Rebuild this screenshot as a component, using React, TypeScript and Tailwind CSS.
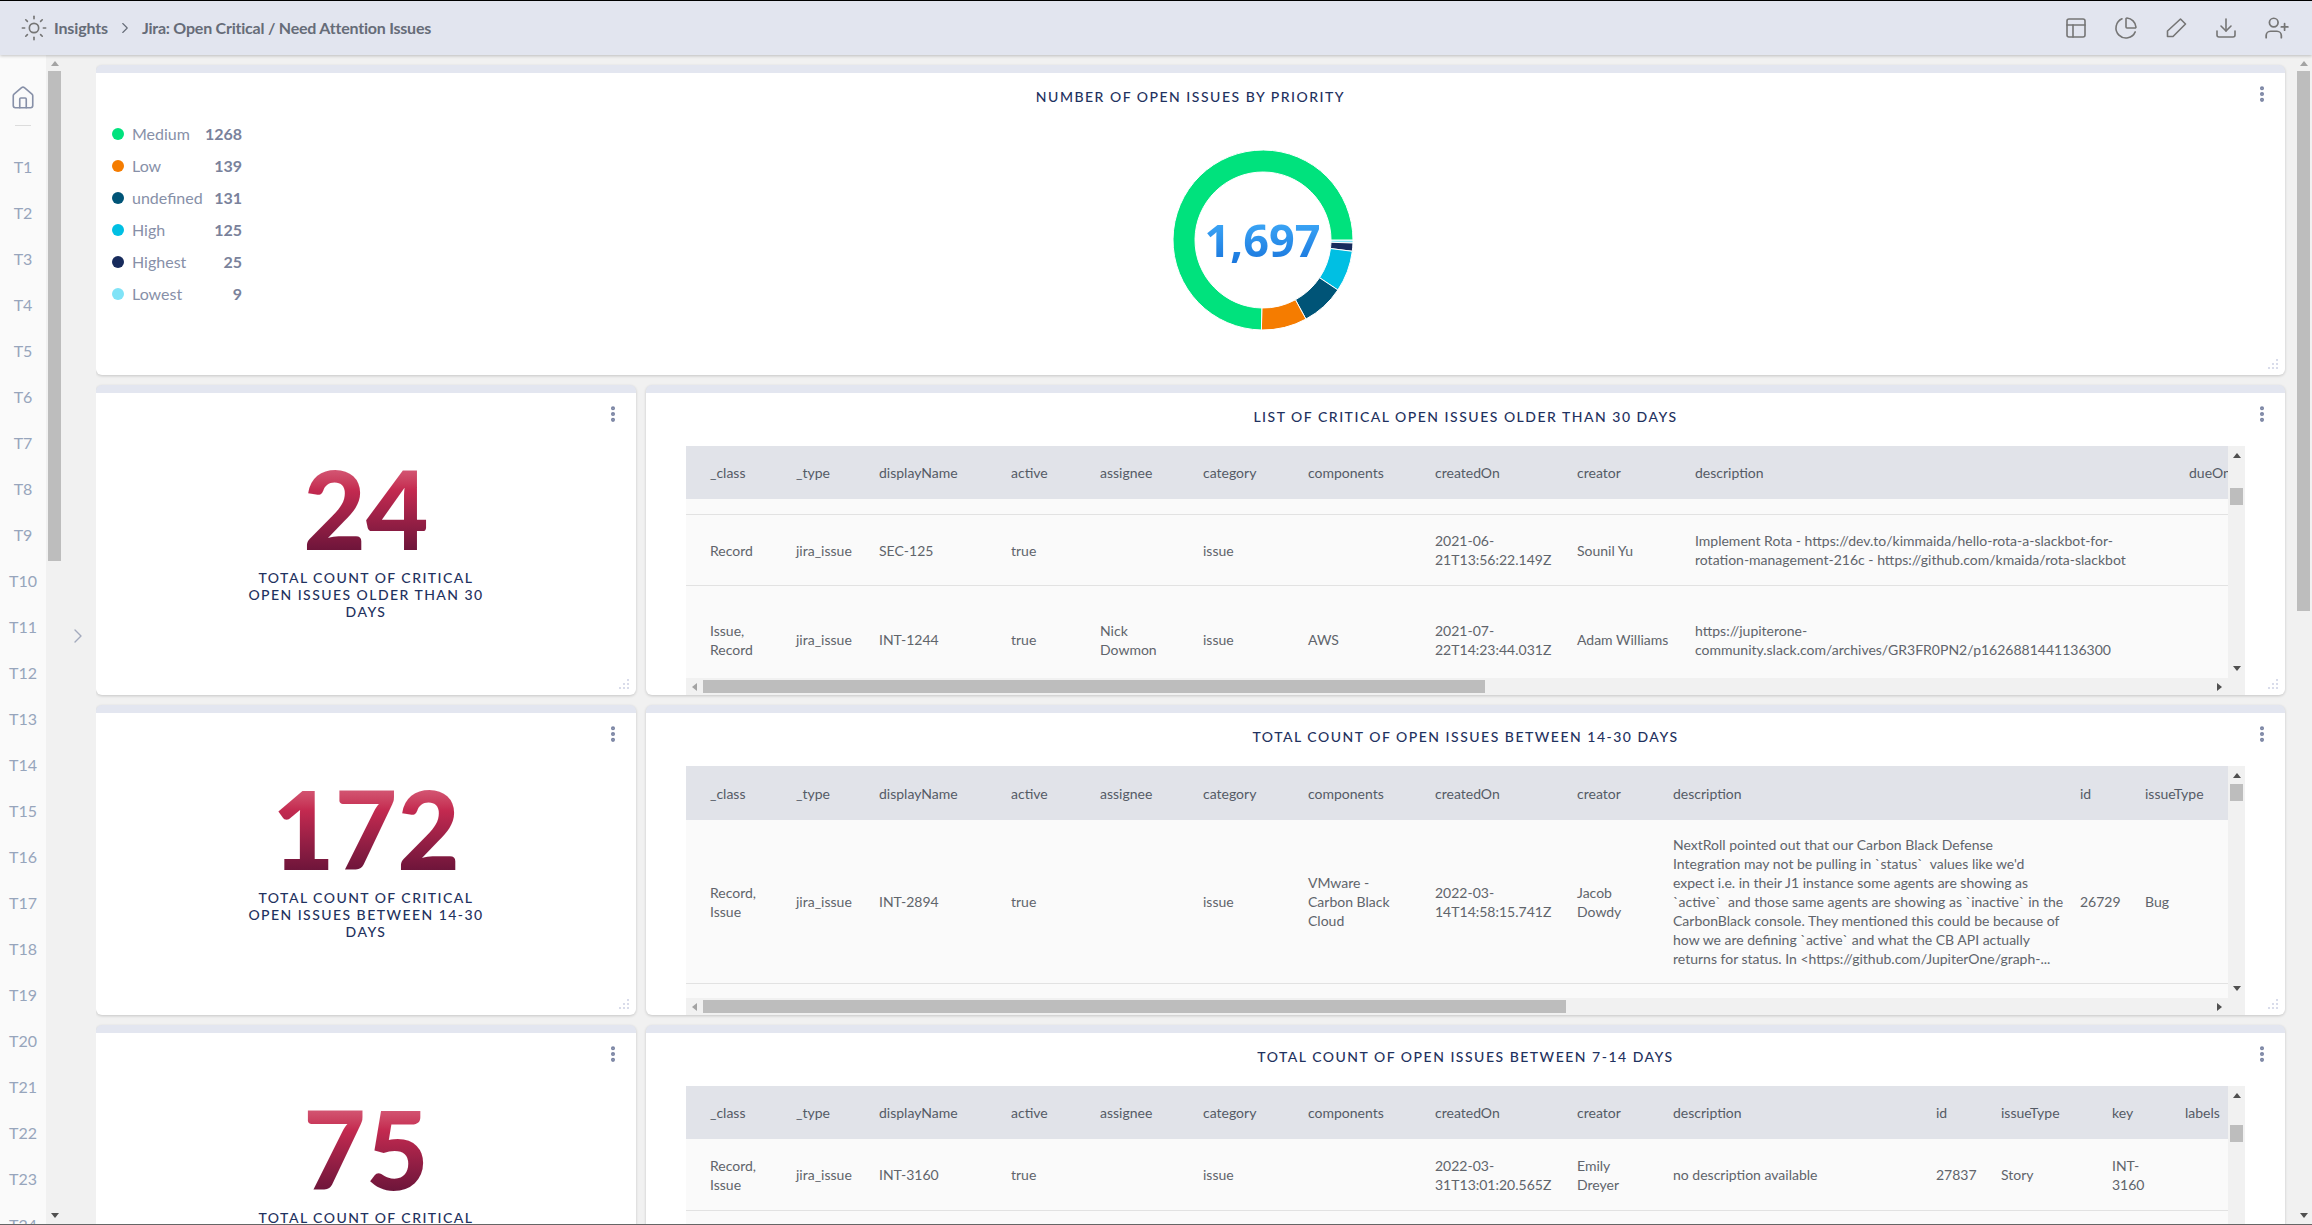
import React from "react";
import { ChartPie, ChevronRight, Download, EllipsisVertical, House, PanelsTopLeft, Sun, UserPlus } from "lucide-react";

const legend = [
  { label: "Medium", value: 1268, color: "#00e27d" },
  { label: "Low", value: 139, color: "#f57c00" },
  { label: "undefined", value: 131, color: "#005477" },
  { label: "High", value: 125, color: "#00bfe3" },
  { label: "Highest", value: 25, color: "#172b5c" },
  { label: "Lowest", value: 9, color: "#80e3f7" },
];

function Donut() {
  const total = 1697;
  const cx = 91, cy = 91, R = 90, r = 68;
  let a = 0;
  const order = [...legend].reverse();
  const pt = (rad: number, deg: number) => {
    const t = (deg * Math.PI) / 180;
    return `${(cx + rad * Math.cos(t)).toFixed(3)} ${(cy + rad * Math.sin(t)).toFixed(3)}`;
  };
  return (
    <svg width="182" height="182" viewBox="0 0 182 182">
      {order.map((s) => {
        const start = a;
        const end = a + (s.value / total) * 360;
        a = end;
        const large = end - start > 180 ? 1 : 0;
        return (
          <path
            key={s.label}
            d={`M ${pt(R, start)} A ${R} ${R} 0 ${large} 1 ${pt(R, end)} L ${pt(r, end)} A ${r} ${r} 0 ${large} 0 ${pt(r, start)} Z`}
            fill={s.color}
            stroke="#ffffff"
            strokeWidth="1"
          />
        );
      })}
    </svg>
  );
}

function Tri({ dir, light }: { dir: "up" | "down" | "left" | "right"; light?: boolean }) {
  const pts = { up: "4,1 8,6 0,6", down: "0,2 8,2 4,7", left: "6,0 6,8 1,4", right: "2,0 2,8 7,4" }[dir];
  return (
    <svg width="8" height="8" viewBox="0 0 8 8" className="shrink-0">
      <polygon points={pts} fill={light ? "#a3a3a3" : "#505050"} />
    </svg>
  );
}

function PanelDots() {
  return (
    <div className="absolute top-[11px] right-[13px] text-[#7a84a3]">
      <EllipsisVertical size={20} strokeWidth={2.9} />
    </div>
  );
}

function ResizeHandle() {
  return (
    <svg width="12" height="12" viewBox="0 0 12 12" className="absolute right-[6px] bottom-[5px]">
      {[[9, 1], [5, 5], [9, 5], [1, 9], [5, 9], [9, 9]].map(([x, y]) => (
        <rect key={`${x}-${y}`} x={x} y={y} width="2" height="2" fill="#d9dcea" />
      ))}
    </svg>
  );
}

function Panel({ children, className = "" }: { children: React.ReactNode; className?: string }) {
  return (
    <div className={`relative h-[310px] shrink-0 overflow-hidden rounded-[6px] border-t-8 border-[#e3e6f0] bg-white shadow-[0_1px_3px_rgba(0,0,0,0.18)] ${className}`}>
      {children}
      <PanelDots />
      <ResizeHandle />
    </div>
  );
}

const Title = ({ text }: { text: string }) => (
  <div className="flex h-[46px] items-center justify-center text-[14px] font-medium tracking-[1.5px] text-[#1f3260]">{text}</div>
);

function Metric({ value, lines }: { value: string; lines: string }) {
  return (
    <Panel>
      <div className="flex flex-col items-center pt-[70px]">
        <div className="bg-linear-to-b from-[#d8627f] via-[#c42a50] via-30% to-[#6a1439] bg-clip-text text-[108px] leading-[90px] font-black text-transparent">{value}</div>
        <div className="mt-[16px] text-center text-[14px] leading-[17px] font-medium tracking-[1.45px] whitespace-pre text-[#1f3260]">{lines}</div>
      </div>
    </Panel>
  );
}

type Row = { h: string; cells: string[] };

function DataTable({
  title, cols, header, rows, thumbOffset, hThumb, headerH, spacer,
}: {
  title: string; cols: string; header: string[]; rows: Row[]; thumbOffset: string; hThumb: string; headerH: string; spacer?: boolean;
}) {
  return (
    <Panel>
      <Title text={title} />
      <div className="h-[7px]" />
      <div className="mx-[40px] flex h-[249px] flex-col">
        <div className="flex min-h-0 flex-1">
          <div className="min-w-0 flex-1 overflow-hidden">
            <div className={`grid ${cols} ${headerH} items-center bg-[#e1e3e9] text-[14px] text-[#555b66]`}>
              {header.map((h, i) => (
                <div key={i} className="pl-[24px] whitespace-nowrap">{h}</div>
              ))}
            </div>
            <div className="h-full bg-[#fafafa]">
              {spacer && <div className="h-[16px] border-b border-[#e2e2e2]" />}
              {rows.map((r, i) => (
                <div key={i} className={`grid ${cols} ${r.h} items-center border-b border-[#e2e2e2] text-[14px] leading-[19px] text-[#60646b]`}>
                  {r.cells.map((c, j) => (
                    <div key={j} className="pl-[24px] whitespace-pre">{c}</div>
                  ))}
                </div>
              ))}
            </div>
          </div>
          <div className="flex w-[17px] shrink-0 flex-col items-center bg-[#f1f1f1] py-[6px]">
            <Tri dir="up" />
            <div className={`h-[17px] w-[13px] shrink-0 bg-[#bdbdbd] ${thumbOffset}`} />
            <div className="mt-auto"><Tri dir="down" /></div>
          </div>
        </div>
        <div className="flex h-[17px] shrink-0 items-center bg-[#f1f1f1]">
          <div className="flex w-[17px] justify-center"><Tri dir="left" light /></div>
          <div className={`h-[13px] bg-[#bdbdbd] ${hThumb}`} />
          <div className="ml-auto mr-[22px]"><Tri dir="right" /></div>
        </div>
      </div>
    </Panel>
  );
}

const base = ["_class", "_type", "displayName", "active", "assignee", "category", "components", "createdOn", "creator", "description"];

export default function App() {
  return (
    <div className="flex h-screen w-screen flex-col overflow-hidden border-t border-b border-t-black border-b-[#666] bg-[#f1f1f1] font-['Lato',sans-serif]">
      <header className="relative z-10 flex h-[54px] shrink-0 items-center bg-[#e2e5ef] pr-[22px] pl-[20px] shadow-[0_1px_3px_rgba(0,0,0,0.22)]">
        <Sun size={28} strokeWidth={1.4} className="text-[#757575]" />
        <span className="ml-[6px] text-[16px] font-bold tracking-[-0.15px] text-[#666c78]">Insights</span>
        <ChevronRight size={18} strokeWidth={1.5} className="ml-[8px] text-[#666c78]" />
        <span className="ml-[8px] text-[16px] font-bold tracking-[-0.22px] text-[#666c78]">Jira: Open Critical / Need Attention Issues</span>
        <div className="ml-auto flex items-center gap-[26px] text-[#757575]">
          <PanelsTopLeft size={24} strokeWidth={1.6} />
          <ChartPie size={24} strokeWidth={1.6} />
          <svg width="24" height="24" viewBox="0 0 24 24" fill="none" stroke="currentColor" strokeWidth="1.6" strokeLinejoin="round">
            <path d="M16.5 3 21.500 8 9 20.500H3.500V15z" />
          </svg>
          <Download size={24} strokeWidth={1.6} />
          <UserPlus size={26} strokeWidth={1.6} />
        </div>
      </header>

      <div className="flex min-h-0 flex-1">
        <nav className="flex w-[46px] shrink-0 flex-col items-center overflow-hidden bg-[#fafafa] pt-[30px] text-[#97a5bc]">
          <House size={26} strokeWidth={1.5} className="shrink-0 text-[#8790a8]" />
          <div className="mt-[14px] h-px w-[16px] shrink-0 bg-[#dcdcdc]" />
          <div className="mt-[18px] flex flex-col items-center">
            {Array.from({ length: 24 }, (_, i) => (
              <div key={i} className="flex h-[46px] shrink-0 items-center text-[16px] font-normal">T{i + 1}</div>
            ))}
          </div>
        </nav>

        <div className="flex w-[17px] shrink-0 flex-col items-center pt-[5px] pb-[5px]">
          <Tri dir="up" light />
          <div className="mt-[3px] h-[490px] w-[13px] bg-[#bdbdbd]" />
          <div className="mt-auto"><Tri dir="down" /></div>
        </div>

        <div className="w-[33px] shrink-0 pt-[569px] pl-[3px] text-[#a3aabd]">
          <ChevronRight size={24} strokeWidth={1.4} />
        </div>

        <main className="flex min-w-0 flex-1 flex-col gap-[10px] overflow-hidden pt-[10px] pr-[10px]">
          <Panel>
            <div className="flex h-[46px] items-center justify-center text-[14px] font-medium tracking-[1.5px] text-[#1f3260]">NUMBER OF OPEN ISSUES BY PRIORITY</div>
            <div className="-mt-px flex">
              <div className="ml-[16px] grid h-[192px] grid-cols-[20px_70px_40px] auto-rows-[32px] items-center text-[16px] text-[#8790a8]">
                {legend.map((l) => (
                  <React.Fragment key={l.label}>
                    <span className="h-[12px] w-[12px] rounded-full" style={{ backgroundColor: l.color }} />
                    <span className="font-normal">{l.label}</span>
                    <span className="text-right font-bold text-[#7a829b]">{l.value}</span>
                  </React.Fragment>
                ))}
              </div>
              <div className="flex flex-1 justify-center pt-[31px]">
                <div className="relative h-[182px] w-[182px] -translate-x-px">
                  <Donut />
                  <div className="absolute inset-0 flex items-center justify-center">
                    <span className="bg-linear-to-b from-[#42aefa] to-[#1874dc] bg-clip-text font-['Open_Sans',sans-serif] text-[45px] leading-[50px] font-bold text-transparent">1,697</span>
                  </div>
                </div>
              </div>
            </div>
          </Panel>

          <div className="grid grid-cols-[540px_1fr] gap-[10px]">
            <Metric value="24" lines={"TOTAL COUNT OF CRITICAL\nOPEN ISSUES OLDER THAN 30\nDAYS"} />
            <DataTable
              title="LIST OF CRITICAL OPEN ISSUES OLDER THAN 30 DAYS"
              cols="grid-cols-[86px_83px_132px_89px_103px_105px_127px_142px_118px_494px_200px]"
              headerH="h-[53px]"
              spacer
              thumbOffset="mt-[28px]"
              hThumb="w-[782px]"
              header={[...base, "dueOn"]}
              rows={[
                { h: "h-[71px]", cells: ["Record", "jira_issue", "SEC-125", "true", "", "issue", "", "2021-06-\n21T13:56:22.149Z", "Sounil Yu", "Implement Rota - https://dev.to/kimmaida/hello-rota-a-slackbot-for-\nrotation-management-216c - https://github.com/kmaida/rota-slackbot", ""] },
                { h: "h-[108px]", cells: ["Issue,\nRecord", "jira_issue", "INT-1244", "true", "Nick\nDowmon", "issue", "AWS", "2021-07-\n22T14:23:44.031Z", "Adam Williams", "https://jupiterone-\ncommunity.slack.com/archives/GR3FR0PN2/p1626881441136300", ""] },
              ]}
            />
          </div>

          <div className="grid grid-cols-[540px_1fr] gap-[10px]">
            <Metric value="172" lines={"TOTAL COUNT OF CRITICAL\nOPEN ISSUES BETWEEN 14-30\nDAYS"} />
            <DataTable
              title="TOTAL COUNT OF OPEN ISSUES BETWEEN 14-30 DAYS"
              cols="grid-cols-[86px_83px_132px_89px_103px_105px_127px_142px_96px_407px_65px_120px]"
              headerH="h-[54px]"
              thumbOffset="mt-[4px]"
              hThumb="w-[863px]"
              header={[...base, "id", "issueType"]}
              rows={[
                { h: "h-[164px]", cells: ["Record,\nIssue", "jira_issue", "INT-2894", "true", "", "issue", "VMware -\nCarbon Black\nCloud", "2022-03-\n14T14:58:15.741Z", "Jacob\nDowdy", "NextRoll pointed out that our Carbon Black Defense\nIntegration may not be pulling in `status`  values like we'd\nexpect i.e. in their J1 instance some agents are showing as\n`active`  and those same agents are showing as `inactive` in the\nCarbonBlack console. They mentioned this could be because of\nhow we are defining `active` and what the CB API actually\nreturns for status. In <https://github.com/JupiterOne/graph-...", "26729", "Bug"] },
              ]}
            />
          </div>

          <div className="grid grid-cols-[540px_1fr] gap-[10px]">
            <Metric value="75" lines={"TOTAL COUNT OF CRITICAL\nOPEN ISSUES BETWEEN 7-14\nDAYS"} />
            <DataTable
              title="TOTAL COUNT OF OPEN ISSUES BETWEEN 7-14 DAYS"
              cols="grid-cols-[86px_83px_132px_89px_103px_105px_127px_142px_96px_263px_65px_111px_73px_80px]"
              headerH="h-[53px]"
              thumbOffset="mt-[25px]"
              hThumb="w-[700px]"
              header={[...base, "id", "issueType", "key", "labels"]}
              rows={[
                { h: "h-[72px]", cells: ["Record,\nIssue", "jira_issue", "INT-3160", "true", "", "issue", "", "2022-03-\n31T13:01:20.565Z", "Emily\nDreyer", "no description available", "27837", "Story", "INT-\n3160", ""] },
              ]}
            />
          </div>
        </main>

        <div className="flex w-[17px] shrink-0 flex-col items-center pt-[5px] pb-[5px]">
          <Tri dir="up" light />
          <div className="mt-[3px] h-[540px] w-[13px] bg-[#bdbdbd]" />
          <div className="mt-auto"><Tri dir="down" /></div>
        </div>
      </div>
    </div>
  );
}
